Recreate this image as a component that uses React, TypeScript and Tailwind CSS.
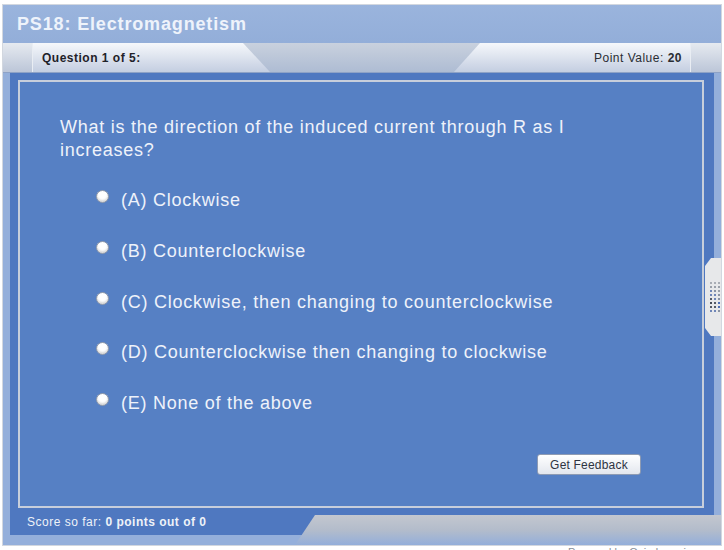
import React from "react";

const OPTIONS = [
  "(A) Clockwise",
  "(B) Counterclockwise",
  "(C) Clockwise, then changing to counterclockwise",
  "(D) Counterclockwise then changing to clockwise",
  "(E) None of the above",
];

const DOT_COLORS = [
  ["#a9adb5", "#a9adb5", "#a9adb5"],
  ["#9aa0aa", "#9aa0aa", "#9aa0aa"],
  ["#6f86b8", "#8a93a3", "#9aa0aa"],
  ["#6f86b8", "#6f86b8", "#8a93a3"],
  ["#555b66", "#6f86b8", "#8a93a3"],
  ["#444a55", "#555b66", "#4f6fb5"],
  ["#555b66", "#555b66", "#4f6fb5"],
  ["#6f86b8", "#6f86b8", "#8a93a3"],
];

function Handle() {
  return (
    <div className="absolute left-[702px] top-[185px] w-[16px] h-[78px] bg-[#e7e8ea] [clip-path:polygon(6px_0,100%_0,100%_100%,6px_100%,0_calc(100%-8px),0_8px)] flex flex-col items-center justify-center gap-[2px] pl-[4px]">
      {DOT_COLORS.map((row, i) => (
        <div key={i} className="flex gap-[2px]">
          {row.map((c, j) => (
            <span key={j} className="block w-[2px] h-[2px]" style={{ backgroundColor: c }} />
          ))}
        </div>
      ))}
    </div>
  );
}

export default function App() {
  return (
    <div className="w-[724px] h-[550px] bg-white overflow-hidden font-['Liberation_Sans',Arial,sans-serif]">
      <div className="ml-[2px] mt-[4px] w-[720px] h-[542px] border border-[#d2d7df] bg-[#94afdb] flex flex-col">
        {/* title */}
        <div className="h-[38px] shrink-0 pl-[14px] pt-[1px] flex items-center text-[18px] font-bold tracking-[0.85px] text-[#eef3fb] bg-gradient-to-b from-[#9ab4dd] to-[#93aed9]">
          PS18: Electromagnetism
        </div>

        {/* tab bar */}
        <div className="h-[30px] shrink-0 flex bg-gradient-to-b from-[#c9d1de] to-[#aebcd3] border-b border-[#8ea2c6]">
          <div className="w-[30px] border-r border-[#e9edf3] bg-gradient-to-b from-[#e6eaf0] to-[#bcc6d8]" />
          <div className="w-[237px] pl-[9px] flex items-center text-[12px] font-bold tracking-[0.5px] text-[#1f2229] bg-gradient-to-b from-[#f6f8fb] to-[#c4cee1] [clip-path:polygon(0_0,calc(100%-27px)_0,100%_100%,0_100%)]">
            Question 1 of 5:
          </div>
          <div className="flex-1" />
          <div className="w-[236px] pr-[8px] flex items-center justify-end text-[12px] tracking-[0.5px] text-[#2a2d33] bg-gradient-to-b from-[#f6f8fb] to-[#c4cee1] [clip-path:polygon(26px_0,100%_0,100%_100%,0_100%)]">
            Point Value:&nbsp;<span className="font-bold">20</span>
          </div>
          <div className="w-[31px] border-l border-[#e9edf3] bg-gradient-to-b from-[#e6eaf0] to-[#bcc6d8]" />
        </div>

        {/* body */}
        <div className="relative flex-1 flex flex-col px-[7px] pb-[10px]">
          <div className="flex-1 flex flex-col bg-[#4f78c0] pt-[7px] pl-[8px] pr-[10px]">
            <div className="flex-1 border-2 border-[#c7cedb] bg-[#5680c4] flex flex-col pl-[40px] pt-[34px] text-[#eef2fa]">
              <p className="w-[560px] text-[18px] leading-[23px] tracking-[0.75px]">
                What is the direction of the induced current through R as I increases?
              </p>
              <div className="mt-[27px] pl-[36px] flex flex-col gap-[27.75px]">
                {OPTIONS.map((o) => (
                  <div key={o} className="flex items-start gap-[12px] text-[18px] leading-[23px] tracking-[0.75px]">
                    <span className="mt-[1px] block w-[13px] h-[13px] rounded-full bg-white border border-[#8c96a8] shadow-[inset_0_-2px_2px_rgba(0,0,0,0.15)]" />
                    <span>{o}</span>
                  </div>
                ))}
              </div>
              <div className="flex justify-end pr-[61px] mt-[39px]">
                <button className="w-[104px] h-[21px] rounded-[3px] border border-[#8e9bb3] bg-gradient-to-b from-[#ffffff] to-[#e3e7ee] text-[12px] tracking-[0.2px] text-[#2e3442] flex items-center justify-center">
                  Get Feedback
                </button>
              </div>
            </div>
            <div className="h-[27px] shrink-0 pl-[9px] flex items-center text-[12px] tracking-[0.5px] text-[#eef2f8]">
              Score so far:&nbsp;<span className="font-bold">0 points out of 0</span>
            </div>
          </div>

          {/* bottom right tab */}
          <div className="absolute right-0 bottom-0 w-[426px] h-[30px] bg-gradient-to-b from-[#c3c7cf] via-[#b3bccb] to-[#93aeda] [clip-path:polygon(20px_0,100%_0,100%_100%,0_100%)]" />

          <Handle />
        </div>
      </div>
      <div className="pl-[568px] text-[11px] leading-[12px] text-[#8a8f99]">
        Powered by Quia Learning Center
      </div>
    </div>
  );
}
